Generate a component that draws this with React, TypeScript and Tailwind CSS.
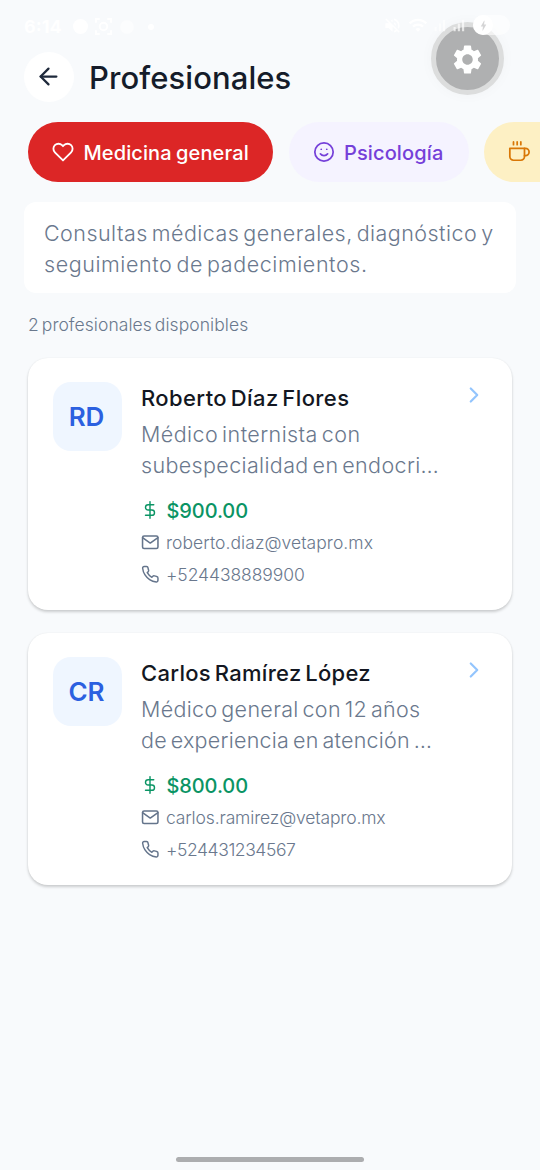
import { FiArrowLeft, FiChevronRight, FiCoffee, FiDollarSign, FiHeart, FiMail, FiPhone, FiSmile } from "react-icons/fi";
import { MdSettings, MdVolumeOff, MdWifi, MdBolt, MdSignalCellularAlt } from "react-icons/md";

type Professional = {
  initials: string;
  name: string;
  nameClass: string;
  bio: { text: string; className: string }[];
  price: string;
  email: string;
  emailClass: string;
  phone: string;
  phoneClass: string;
};

const professionals: Professional[] = [
  {
    initials: "RD",
    name: "Roberto Díaz Flores",
    nameClass: "tracking-[0.4px]",
    bio: [
      { text: "Médico internista con", className: "tracking-[0.43px]" },
      { text: "subespecialidad en endocri…", className: "tracking-[0.36px]" },
    ],
    price: "$900.00",
    email: "roberto.diaz@vetapro.mx",
    emailClass: "tracking-[0.06px]",
    phone: "+524438889900",
    phoneClass: "tracking-[-0.07px]",
  },
  {
    initials: "CR",
    name: "Carlos Ramírez López",
    nameClass: "tracking-[0.31px]",
    bio: [
      { text: "Médico general con 12 años", className: "tracking-[0.32px]" },
      { text: "de experiencia en atención …", className: "tracking-[0.25px]" },
    ],
    price: "$800.00",
    email: "carlos.ramirez@vetapro.mx",
    emailClass: "tracking-[-0.14px]",
    phone: "+524431234567",
    phoneClass: "tracking-[-0.42px]",
  },
];

function StatusBar() {
  return (
    <div className="flex h-[53px] items-center pl-6 pr-7 text-white">
      <span className="text-[18px] font-bold leading-none">6:14</span>
      <span className="ml-[11px] h-[15px] w-[15px] rounded-full bg-white" />
      <svg className="ml-[7px] h-[17px] w-[17px]" viewBox="0 0 18 18" fill="none" stroke="currentColor" strokeWidth="2">
        <path d="M1 5V1h4M13 1h4v4M17 13v4h-4M5 17H1v-4" />
        <circle cx="9" cy="9" r="4" />
      </svg>
      <span className="ml-[8px] h-[14px] w-[14px] rounded-full bg-white/50" />
      <span className="ml-[14px] h-[6px] w-[6px] rounded-full bg-white" />
    </div>
  );
}

function StatusIcons() {
  return (
    <div className="absolute left-[383px] top-[15px] flex items-center text-white">
      <MdVolumeOff size={19} />
      <MdWifi size={20} className="ml-[6px]" />
      <MdSignalCellularAlt size={17} className="ml-[3px] opacity-70" />
      <MdSignalCellularAlt size={17} className="ml-[2px] opacity-70" />
      <span className="ml-[6px] flex h-[20px] w-[37px] items-center rounded-full bg-white/60">
        <span className="flex h-[20px] w-[20px] items-center justify-center rounded-full bg-white text-[#d5d5d6]">
          <MdBolt size={13} />
        </span>
      </span>
    </div>
  );
}

function ProfessionalCard({ person }: { person: Professional }) {
  return (
    <article className="flex h-[252px] rounded-[20px] bg-white pl-[25px] pr-[28px] pt-[24px] shadow-[0_2px_3px_rgba(0,0,0,0.18),0_0_2px_rgba(0,0,0,0.06)]">
      <div className="flex h-[69px] w-[69px] shrink-0 items-center justify-center rounded-[18px] bg-[#eff6ff] pr-[2px] text-[26px] font-semibold text-[#2b60e0]">
        {person.initials}
      </div>
      <div className="ml-[19px] min-w-0 flex-1 whitespace-nowrap">
        <h2 className={`h-[36px] text-[22px] font-medium leading-[33px] text-[#131722] [word-spacing:-2.5px] ${person.nameClass}`}>
          {person.name}
        </h2>
        {person.bio.map((line) => (
          <p key={line.text} className={`h-[31px] pt-px text-[21.5px] font-light leading-[31px] text-[#6a788d] [word-spacing:-2.5px] ${line.className}`}>
            {line.text}
          </p>
        ))}
        <div className="mt-[14px] flex h-[32px] items-center text-[#0a9464]">
          <FiDollarSign size={18} strokeWidth={1.9} />
          <span className="ml-[7.5px] pt-[2px] text-[20px] font-medium tracking-[-0.1px]">{person.price}</span>
        </div>
        <div className="flex h-[32px] items-center text-[#64748b]">
          <FiMail size={18.5} strokeWidth={2} />
          <span className={`ml-[6.5px] pt-[2px] text-[17.5px] font-light text-[#6a788d] ${person.emailClass}`}>{person.email}</span>
        </div>
        <div className="flex h-[32px] items-center text-[#64748b]">
          <FiPhone size={18.5} strokeWidth={1.9} />
          <span className={`ml-[6.5px] pt-[2px] text-[17.5px] font-light text-[#6a788d] ${person.phoneClass}`}>{person.phone}</span>
        </div>
      </div>
      <FiChevronRight size={26} strokeWidth={2} className="mr-[-3px] shrink-0 text-[#93c5fd]" />
    </article>
  );
}

export default function App() {
  return (
    <main className="relative flex h-[1170px] w-[540px] flex-col overflow-hidden bg-[#f8fafc] font-['Inter',sans-serif]">
      <StatusBar />

      <header className="flex h-[49px] items-center pl-[24px]">
        <button className="-mt-[2px] flex h-[50px] w-[50px] items-center justify-center rounded-full bg-white text-[#1e293b]">
          <FiArrowLeft size={27} strokeWidth={2} className="mr-[2px]" />
        </button>
        <h1 className="ml-[15px] pt-[2px] text-[31px] font-medium tracking-[0.08px] text-[#151c2a]">Profesionales</h1>
      </header>

      <nav className="mt-[20px] flex gap-[16px] whitespace-nowrap pl-[28px] text-[20px] font-medium">
        <button className="flex h-[60px] w-[245px] shrink-0 items-center rounded-full bg-[#dc2626] pl-[24px] text-white">
          <FiHeart size={22} strokeWidth={2} />
          <span className="ml-[9.5px] pt-[2px] tracking-[0.1px] [word-spacing:-1px]">Medicina general</span>
        </button>
        <button className="flex h-[60px] w-[180px] shrink-0 items-center rounded-full bg-[#f5f3ff] pl-[24px] text-[#7540d9]">
          <FiSmile size={22} strokeWidth={1.9} />
          <span className="ml-[9px] pt-[2px] tracking-[0.12px]">Psicología</span>
        </button>
        <button className="-ml-px flex h-[60px] w-[180px] shrink-0 items-center rounded-full bg-[#fdf0c4] pl-[24px] text-[#d97706]">
          <FiCoffee size={22} strokeWidth={1.9} />
        </button>
      </nav>

      <section className="mx-[24px] mt-[20px] h-[91px] whitespace-nowrap rounded-[12px] bg-white pl-[20px] pt-[15.5px] text-[21.5px] font-light leading-[31px] text-[#6a788d] [word-spacing:-2.5px]">
        <p className="tracking-[0.46px]">Consultas médicas generales, diagnóstico y</p>
        <p className="tracking-[0.57px]">seguimiento de padecimientos.</p>
      </section>

      <p className="mt-[19px] h-[24px] pl-[28px] pt-px text-[17.5px] font-light leading-[24px] tracking-[0.06px] text-[#6a788d] [word-spacing:-2px]">
        2 profesionales disponibles
      </p>

      <div className="mx-[28px] mt-[22px] flex flex-col gap-[23px]">
        {professionals.map((person) => (
          <ProfessionalCard key={person.email} person={person} />
        ))}
      </div>

      <div className="absolute left-[431px] top-[22px] flex h-[73px] w-[73px] items-center justify-center rounded-full border-[5.5px] border-[#dcdddd] bg-[#afb0b1] pt-[2px] text-white shadow-[0_0_14px_rgba(0,0,0,0.03)]">
        <MdSettings size={35} />
      </div>
      <StatusIcons />
      <div className="absolute bottom-[8px] left-[176px] h-[5px] w-[188px] rounded-full bg-[#acadaf]" />
    </main>
  );
}
